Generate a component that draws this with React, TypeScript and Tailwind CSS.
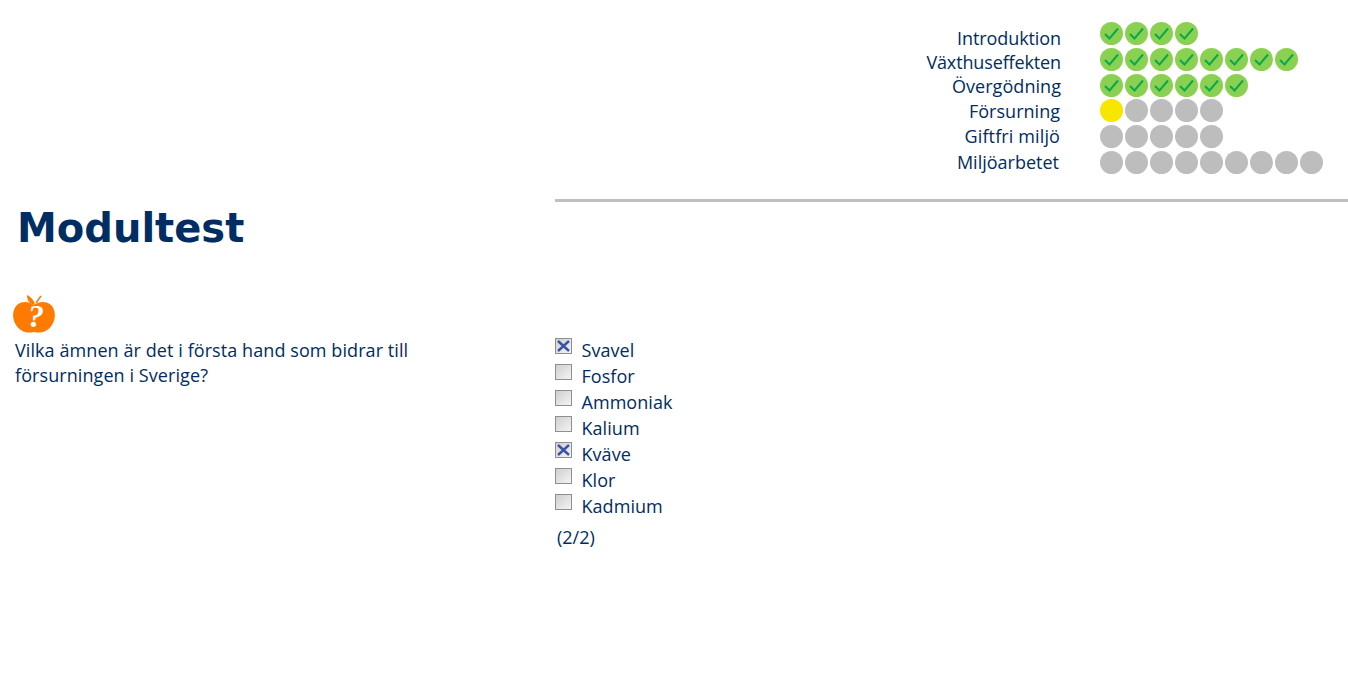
const progress = [
  { label: 'Introduktion', dots: 'gggg', row: 'h-[24px] mr-0 tracking-[-0.09px]' },
  { label: 'Växthuseffekten', dots: 'gggggggg', row: 'h-[24px] mr-0 tracking-[-0.13px]' },
  { label: 'Övergödning', dots: 'gggggg', row: 'h-[25px] mr-0 tracking-[0.05px]' },
  { label: 'Försurning', dots: 'yxxxx', row: 'h-[25px] mr-px tracking-[0.02px]' },
  { label: 'Giftfri miljö', dots: 'xxxxx', row: 'h-[26px] mr-px tracking-[0.12px]' },
  { label: 'Miljöarbetet', dots: 'xxxxxxxxx', row: 'h-[25px] mr-[2px]' },
];

const answers = [
  { label: 'Svavel', checked: true },
  { label: 'Fosfor', checked: false },
  { label: 'Ammoniak', checked: false },
  { label: 'Kalium', checked: false },
  { label: 'Kväve', checked: true },
  { label: 'Klor', checked: false },
  { label: 'Kadmium', checked: false },
];

function Dot({ kind }: { kind: string }) {
  if (kind === 'g') {
    return (
      <div className="w-[23px] h-[23px] rounded-full bg-[#8ad151] flex items-center justify-center">
        <svg width="17" height="17" viewBox="0 0 17 17" fill="none">
          <path d="M2 9l4.5 4.5L15 3.5" stroke="#0aa84f" strokeWidth="2" />
        </svg>
      </div>
    );
  }
  if (kind === 'y') {
    return <div className="w-[23px] h-[23px] rounded-full bg-[#f7e600]" />;
  }
  return <div className="w-[23px] h-[23px] rounded-full bg-[#bdbdbd]" />;
}

function CheckBox({ checked }: { checked: boolean }) {
  return (
    <div className="w-[17px] h-[16px] mt-[5px] border border-[#8f8f8f] bg-gradient-to-br from-[#cfcfcf] to-[#f4f4f4] p-px flex items-center justify-center">
      {checked && (
        <svg width="13" height="12" viewBox="0 0 13 12" fill="none">
          <path d="M1 1l11 10M12 1L1 11" stroke="#3a53a4" strokeWidth="2.4" />
        </svg>
      )}
    </div>
  );
}

export default function App() {
  return (
    <div className="w-[1348px] h-[675px] bg-white overflow-hidden text-[#002d62] font-['Open_Sans',sans-serif] text-[18px]">
      {/* Progress */}
      <div className="h-[199px] flex justify-end pr-[25px] pt-[22px]">
        <div className="w-[170px] pt-[4px] mr-[39px] flex flex-col items-end">
          {progress.map((p) => (
            <div key={p.label} className={`leading-[24px] whitespace-nowrap ${p.row}`}>
              {p.label}
            </div>
          ))}
        </div>
        <div className="w-[223px] flex flex-col gap-[2.8px]">
          {progress.map((p) => (
            <div key={p.label} className="flex gap-[2px]">
              {p.dots.split('').map((d, i) => (
                <Dot key={i} kind={d} />
              ))}
            </div>
          ))}
        </div>
      </div>
      <div className="ml-[555px] h-[3px] bg-[#bfbfbf]" />

      <h1 className="ml-[17px] mt-[1px] h-[51px] leading-[50px] font-['DejaVu_Sans',sans-serif] font-bold text-[40px]">
        Modultest
      </h1>

      <div className="flex mt-[41px]">
        {/* Question */}
        <div className="w-[555px] pl-[12px]">
          <svg width="44" height="40" viewBox="0 0 44 40" className="block -mt-px">
            <path
              d="M22 11C17 7 9 7 5 11C0 16 0 25 4 31C8 37 14 40 22 38C30 40 36 37 40 31C44 25 44 16 39 11C35 7 27 7 22 11Z"
              fill="#ff7a00"
            />
            <path d="M23 11C22 6 19 3 15 1C15 7 18 10 23 11Z" fill="#ff7a00" />
            <path d="M24 9L29 2" stroke="#ff7a00" strokeWidth="1.5" />
            <text
              x="24"
              y="33"
              textAnchor="middle"
              fill="#fff"
              fontFamily="'Liberation Serif', serif"
              fontWeight="700"
              fontStyle="italic"
              fontSize="32"
            >
              ?
            </text>
          </svg>
          <p className="ml-[3px] mt-[4px] w-[420px] leading-[25px] tracking-[0.08px]">
            Vilka ämnen är det i första hand som bidrar till försurningen i Sverige?
          </p>
        </div>

        {/* Answers */}
        <div className="pt-[41px]">
          {answers.map((a) => (
            <div key={a.label} className="flex h-[26px] leading-[26px]">
              <div className="w-[26.5px] -mt-[3px]">
                <CheckBox checked={a.checked} />
              </div>
              <span className="mt-[1px] tracking-[0.05px]">{a.label}</span>
            </div>
          ))}
          <p className="ml-[2px] mt-[7px] leading-[24px]">(2/2)</p>
        </div>
      </div>
    </div>
  );
}
